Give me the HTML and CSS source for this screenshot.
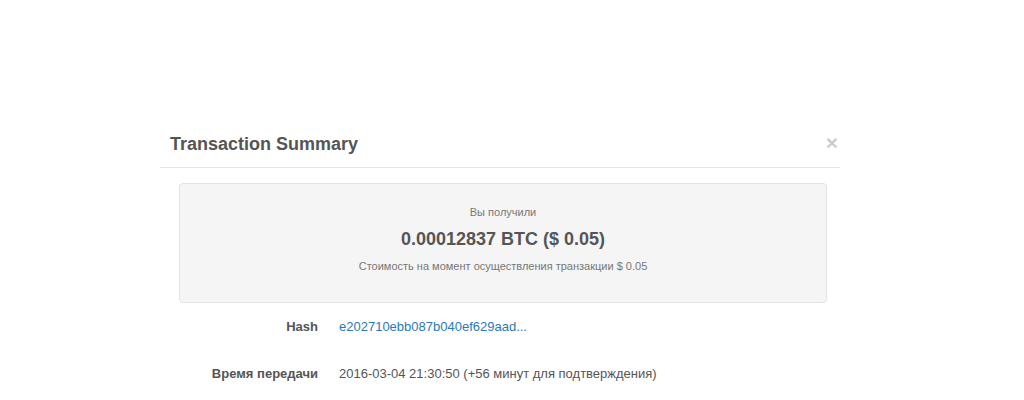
FILE: index.html
```html
<!DOCTYPE html>
<html>
<head>
    <title>Transaction Summary</title>
    <link rel="stylesheet" href="styles.css">
</head>
<body>
    <div class="modal">
        <div class="modal-header">
            <h4 class="modal-title">Transaction Summary</h4>
            <button class="close">&times;</button>
        </div>
        <div class="modal-body">
            <div class="well">
                <div class="well-caption">Вы получили</div>
                <div class="well-amount">0.00012837 BTC ($ 0.05)</div>
                <div class="well-note">Стоимость на момент осуществления транзакции $ 0.05</div>
            </div>
            <div class="details">
                <div class="label">Hash</div>
                <div class="value"><a href="#">e202710ebb087b040ef629aad...</a></div>
                <div class="label">Время передачи</div>
                <div class="value">2016-03-04 21:30:50 (+56 минут для подтверждения)</div>
            </div>
        </div>
    </div>
</body>
</html>
```

FILE: styles.css
```css
body {
    margin: 0;
    padding-top: 121px;
    font-family: "Liberation Sans", Arial, sans-serif;
    color: #555;
    background: #fff;
}
.modal {
    width: 680px;
    margin-left: 160px;
}
.modal-header {
    display: flex;
    justify-content: space-between;
    align-items: center;
    padding: 13px 2px 13px 10px;
    border-bottom: 1px solid #e5e5e5;
}
.modal-title {
    margin: 0;
    font-size: 18px;
    line-height: 20px;
    font-weight: bold;
    color: #555;
}
.close {
    padding: 0;
    border: 0;
    background: none;
    font-family: "Liberation Sans", Arial, sans-serif;
    font-size: 21px;
    font-weight: bold;
    line-height: 1;
    color: #000;
    opacity: 0.2;
    margin-top: -4px;
    cursor: pointer;
}
.modal-body {
    padding: 15px 13px 0 19px;
}
.well {
    background: #f5f5f5;
    border: 1px solid #e3e3e3;
    border-radius: 4px;
    padding: 20px 0 28px;
    text-align: center;
}
.well-caption,
.well-note {
    font-size: 11px;
    line-height: 16px;
    color: #777;
}
.well-amount {
    margin: 7px 0;
    font-size: 18px;
    line-height: 24px;
    font-weight: bold;
    color: #555;
}
.details {
    display: grid;
    grid-template-columns: 139px 1fr;
    column-gap: 21px;
    row-gap: 27px;
    margin-top: 14px;
    font-size: 13px;
    line-height: 20px;
}
.label {
    text-align: right;
    font-weight: bold;
}
.value a {
    color: #2a7ab8;
    text-decoration: none;
}
```
